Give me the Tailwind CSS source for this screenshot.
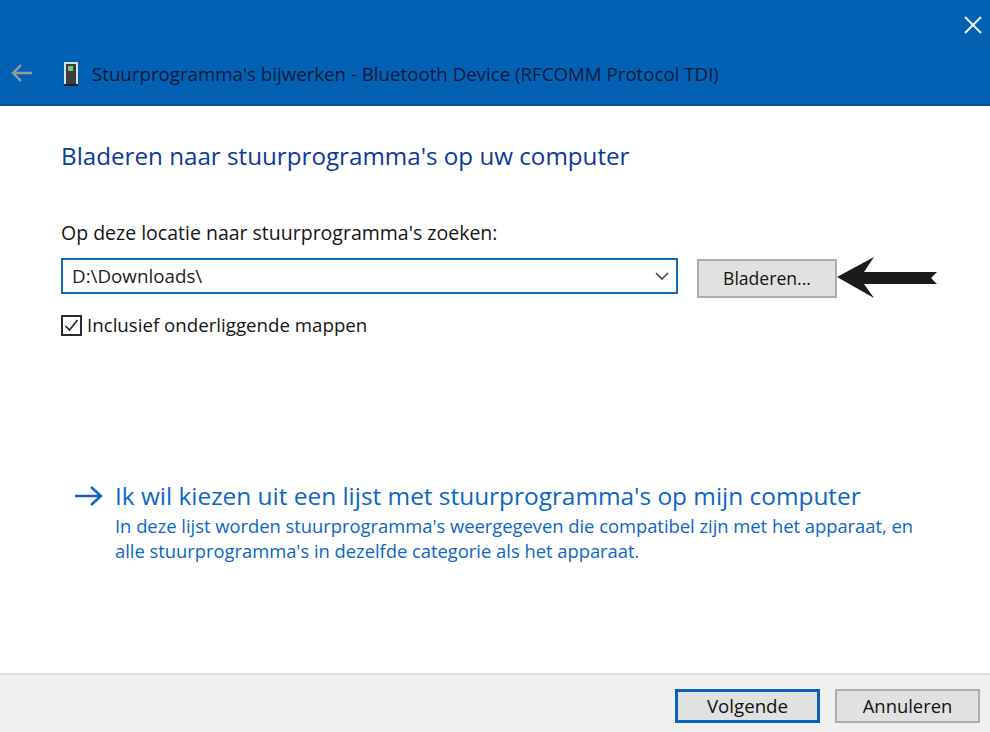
<!DOCTYPE html>
<html lang="nl">

<head>
  <meta charset="UTF-8" />
  <title>Stuurprogramma's bijwerken</title>
  <script src="https://cdn.jsdelivr.net/npm/@tailwindcss/browser@4"></script>
</head>

<body class="font-['Open_Sans',sans-serif] bg-white">
  <div class="relative w-[990px] h-[732px] flex flex-col overflow-hidden">
    <!-- Title bar -->
    <div class="h-[106px] shrink-0 bg-[#0361b3] border-b-2 border-[#0a4f9c] relative flex items-end pb-[18px] pl-[10px]">
      <svg class="w-6 h-6 mr-[28px] mb-[1px]" viewBox="0 0 24 24" fill="none" stroke="#9a9a94" stroke-width="2.4">
        <path d="M22 12H3M11 4l-8 8 8 8" />
      </svg>
      <svg class="w-[20px] h-[26px] mr-[10px] mb-[-1px]" viewBox="0 0 20 26">
        <rect x="2" y="1" width="14" height="22" fill="#cfe0ee" />
        <rect x="4" y="3" width="10" height="20" fill="#3d3d3d" />
        <rect x="6" y="5" width="5" height="5" fill="#5fd85a" />
        <rect x="2" y="23" width="14" height="2" fill="#16263a" />
      </svg>
      <span class="text-[18.7px] leading-6 text-[#0b1a3a] whitespace-nowrap">Stuurprogramma's bijwerken - Bluetooth Device (RFCOMM Protocol TDI)</span>
      <svg class="absolute right-[8px] top-[16px] w-[18px] h-[18px]" viewBox="0 0 18 18" stroke="#e8f1fa" stroke-width="2">
        <path d="M1 1l16 16M17 1L1 17" />
      </svg>
    </div>

    <!-- Content -->
    <div class="flex-1 pl-[61px] pr-[60px] flex flex-col">
      <h1 class="mt-[34px] text-[24.2px] leading-8 text-[#0a3a9c] whitespace-nowrap">Bladeren naar stuurprogramma's op uw computer</h1>

      <p class="mt-[49px] text-[19.5px] leading-6 text-[#151515] whitespace-nowrap">Op deze locatie naar stuurprogramma's zoeken:</p>

      <div class="mt-[13px] flex items-start">
        <div class="w-[617px] h-[36px] border-2 border-[#0f6cbd] flex items-center justify-between pl-[9px] pr-[6px] text-[18.8px] text-[#222]">
          <span>D:\Downloads\</span>
          <svg class="w-[16px] h-[10px]" viewBox="0 0 16 10" fill="none" stroke="#444" stroke-width="1.6">
            <path d="M2 2l6 6 6-6" />
          </svg>
        </div>
        <button class="ml-[19px] mt-[1px] w-[140px] h-[39px] bg-[#e1e1e1] border-2 border-[#adadad] text-[17.6px] text-[#111]">Bladeren...</button>
      </div>

      <label class="mt-[15px] flex items-center text-[18.7px] leading-6 text-[#151515]">
        <span class="w-[21px] h-[21px] border-2 border-[#2b2b2b] mr-[5px] flex items-center justify-center">
          <svg class="w-[15px] h-[15px]" viewBox="0 0 15 15" fill="none" stroke="#222" stroke-width="1.6">
            <path d="M1.5 8l4 4 8-10" />
          </svg>
        </span>
        Inclusief onderliggende mappen
      </label>

      <!-- Link option -->
      <div class="mt-[143px] flex text-[#0a66c8]">
        <svg class="w-[29px] h-[24px] ml-[13px] mt-[4px] shrink-0" viewBox="0 0 29 24" fill="none" stroke="#0f62c4" stroke-width="2.4">
          <path d="M1 12h26M17 3l10 9-10 9" />
        </svg>
        <div class="ml-[12px]">
          <p class="text-[24.4px] leading-8 whitespace-nowrap">Ik wil kiezen uit een lijst met stuurprogramma's op mijn computer</p>
          <p class="text-[18.35px] leading-[25px] mt-[1px] whitespace-nowrap">In deze lijst worden stuurprogramma's weergegeven die compatibel zijn met het apparaat, en<br>alle stuurprogramma's in dezelfde categorie als het apparaat.</p>
        </div>
      </div>
    </div>

    <!-- Footer -->
    <div class="h-[59px] shrink-0 bg-[#f0f0f0] border-t-2 border-[#dfdfdf] flex justify-end gap-[15px] pr-[10px] pt-[14px]">
      <button class="w-[145px] h-[34px] bg-[#e1e1e1] border-[3px] border-[#0a62bd] text-[18.7px] text-[#111]">Volgende</button>
      <button class="w-[145px] h-[34px] bg-[#e1e1e1] border-2 border-[#adadad] text-[18.4px] text-[#111]">Annuleren</button>
    </div>

    <!-- Annotation arrow over the Bladeren button -->
    <svg class="absolute left-[836px] top-[256px] w-[102px] h-[43px]" viewBox="0 0 102 43">
      <path d="M1 21L38 1 28 16H101L95 22 101 28H28L38 42Z" fill="#1c1a1a" />
    </svg>
  </div>
</body>

</html>
